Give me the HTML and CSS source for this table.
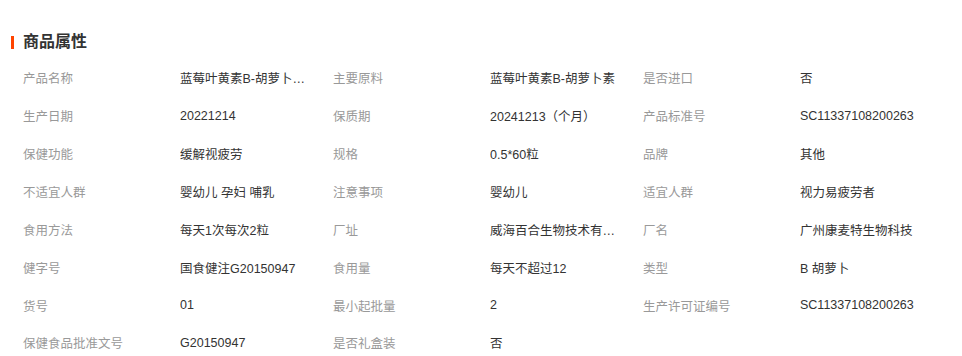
FILE: index.html
```html
<!DOCTYPE html>
<html lang="zh-CN">
<head>
<meta charset="utf-8">
<title>商品属性</title>
<link rel="stylesheet" href="styles.css">
</head>
<body>
<section class="attrs">
  <h2 class="attrs-title">商品属性</h2>
  <div class="attrs-grid">
    <div class="label">产品名称</div><div class="value">蓝莓叶黄素B-胡萝卜素软胶囊</div>
    <div class="label">主要原料</div><div class="value">蓝莓叶黄素B-胡萝卜素</div>
    <div class="label">是否进口</div><div class="value">否</div>

    <div class="label">生产日期</div><div class="value">20221214</div>
    <div class="label">保质期</div><div class="value">20241213（个月）</div>
    <div class="label">产品标准号</div><div class="value">SC11337108200263</div>

    <div class="label">保健功能</div><div class="value">缓解视疲劳</div>
    <div class="label">规格</div><div class="value">0.5*60粒</div>
    <div class="label">品牌</div><div class="value">其他</div>

    <div class="label">不适宜人群</div><div class="value">婴幼儿 孕妇 哺乳</div>
    <div class="label">注意事项</div><div class="value">婴幼儿</div>
    <div class="label">适宜人群</div><div class="value">视力易疲劳者</div>

    <div class="label">食用方法</div><div class="value">每天1次每次2粒</div>
    <div class="label">厂址</div><div class="value">威海百合生物技术有限公司</div>
    <div class="label">厂名</div><div class="value">广州康麦特生物科技</div>

    <div class="label">健字号</div><div class="value">国食健注G20150947</div>
    <div class="label">食用量</div><div class="value">每天不超过12</div>
    <div class="label">类型</div><div class="value">B 胡萝卜</div>

    <div class="label">货号</div><div class="value">01</div>
    <div class="label">最小起批量</div><div class="value">2</div>
    <div class="label">生产许可证编号</div><div class="value">SC11337108200263</div>

    <div class="label">保健食品批准文号</div><div class="value">G20150947</div>
    <div class="label">是否礼盒装</div><div class="value">否</div>
  </div>
</section>
</body>
</html>
```

FILE: styles.css
```css
html, body {
  margin: 0;
  padding: 0;
  background: #ffffff;
}

body {
  font-family: "Liberation Sans", "Noto Sans CJK SC", sans-serif;
  font-size: 12.5px;
  color: #333333;
}

.attrs {
  padding: 30px 0 0 11px;
}

.attrs-title {
  margin: 0;
  display: flex;
  align-items: center;
  height: 24px;
  font-size: 16px;
  font-weight: bold;
  color: #333333;
  line-height: 24px;
}

.attrs-title::before {
  content: "";
  width: 3px;
  height: 13px;
  margin-right: 9px;
  background: #ff4400;
}

.attrs-grid {
  margin-top: 5px;
  padding-left: 12px;
  display: grid;
  grid-template-columns: 157px 153px 157px 153px 157px 153px;
  grid-auto-rows: 37.86px;
  align-items: center;
}

.label {
  color: #999999;
  white-space: nowrap;
}

.value {
  color: #333333;
  max-width: 130px;
  white-space: nowrap;
  overflow: hidden;
  text-overflow: ellipsis;
}
```
